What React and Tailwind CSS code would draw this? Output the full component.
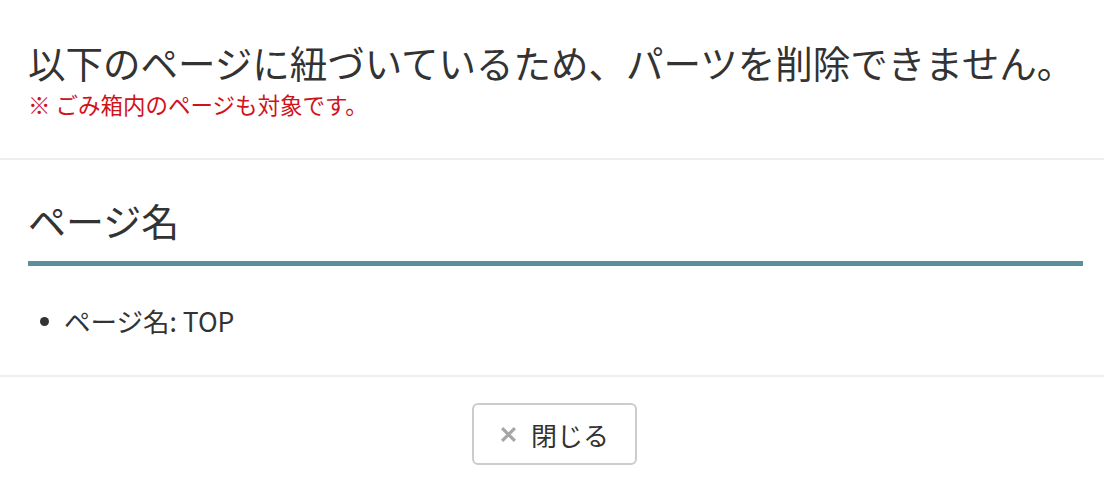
const FONT = { fontFamily: '"Noto Sans CJK JP", "Noto Sans", sans-serif' };

const CloseIcon = () => (
  <svg width="17" height="17" viewBox="0 0 16 16" className="text-[#a6a6a6]">
    <path d="M2 2 L14 14 M14 2 L2 14" stroke="currentColor" strokeWidth="3" />
  </svg>
);

const App = () => {
  return (
    <div className="w-[1104px] h-[480px] bg-white text-[#333]" style={FONT}>
      {/* header */}
      <div className="pl-7 pr-4 pt-[35px] h-[160px] border-b-2 border-[#eeeeee]">
        <h1 className="text-[37.5px] leading-[54px] whitespace-nowrap">
          以下のページに紐づいているため、パーツを削除できません。
        </h1>
        <p className="text-[22.5px] leading-[30px] text-[#d0121b]">※ ごみ箱内のページも対象です。</p>
      </div>

      {/* body */}
      <div className="pl-7 pr-[21px] h-[217px] border-b-2 border-[#eeeeee]">
        <h2 className="pt-[34px] pb-[15px] text-[38px] leading-[52px] border-b-[5px] border-[#5b8f99]">
          ページ名
        </h2>
        <ul className="mt-[38px] pl-[12px]">
          <li className="flex items-center gap-[15px] text-[26.5px] leading-[34px]">
            <span className="w-[9px] h-[9px] rounded-full bg-[#333]"></span>
            ページ名: TOP
          </li>
        </ul>
      </div>

      {/* footer */}
      <div className="flex justify-center pt-[26px] pl-[5px]">
        <button className="flex items-center gap-[14px] w-[165px] h-[62px] justify-center border-2 border-[#cccccc] rounded-[6px] text-[26px] text-[#333] bg-white">
          <CloseIcon />
          閉じる
        </button>
      </div>
    </div>
  );
};
export default App;
